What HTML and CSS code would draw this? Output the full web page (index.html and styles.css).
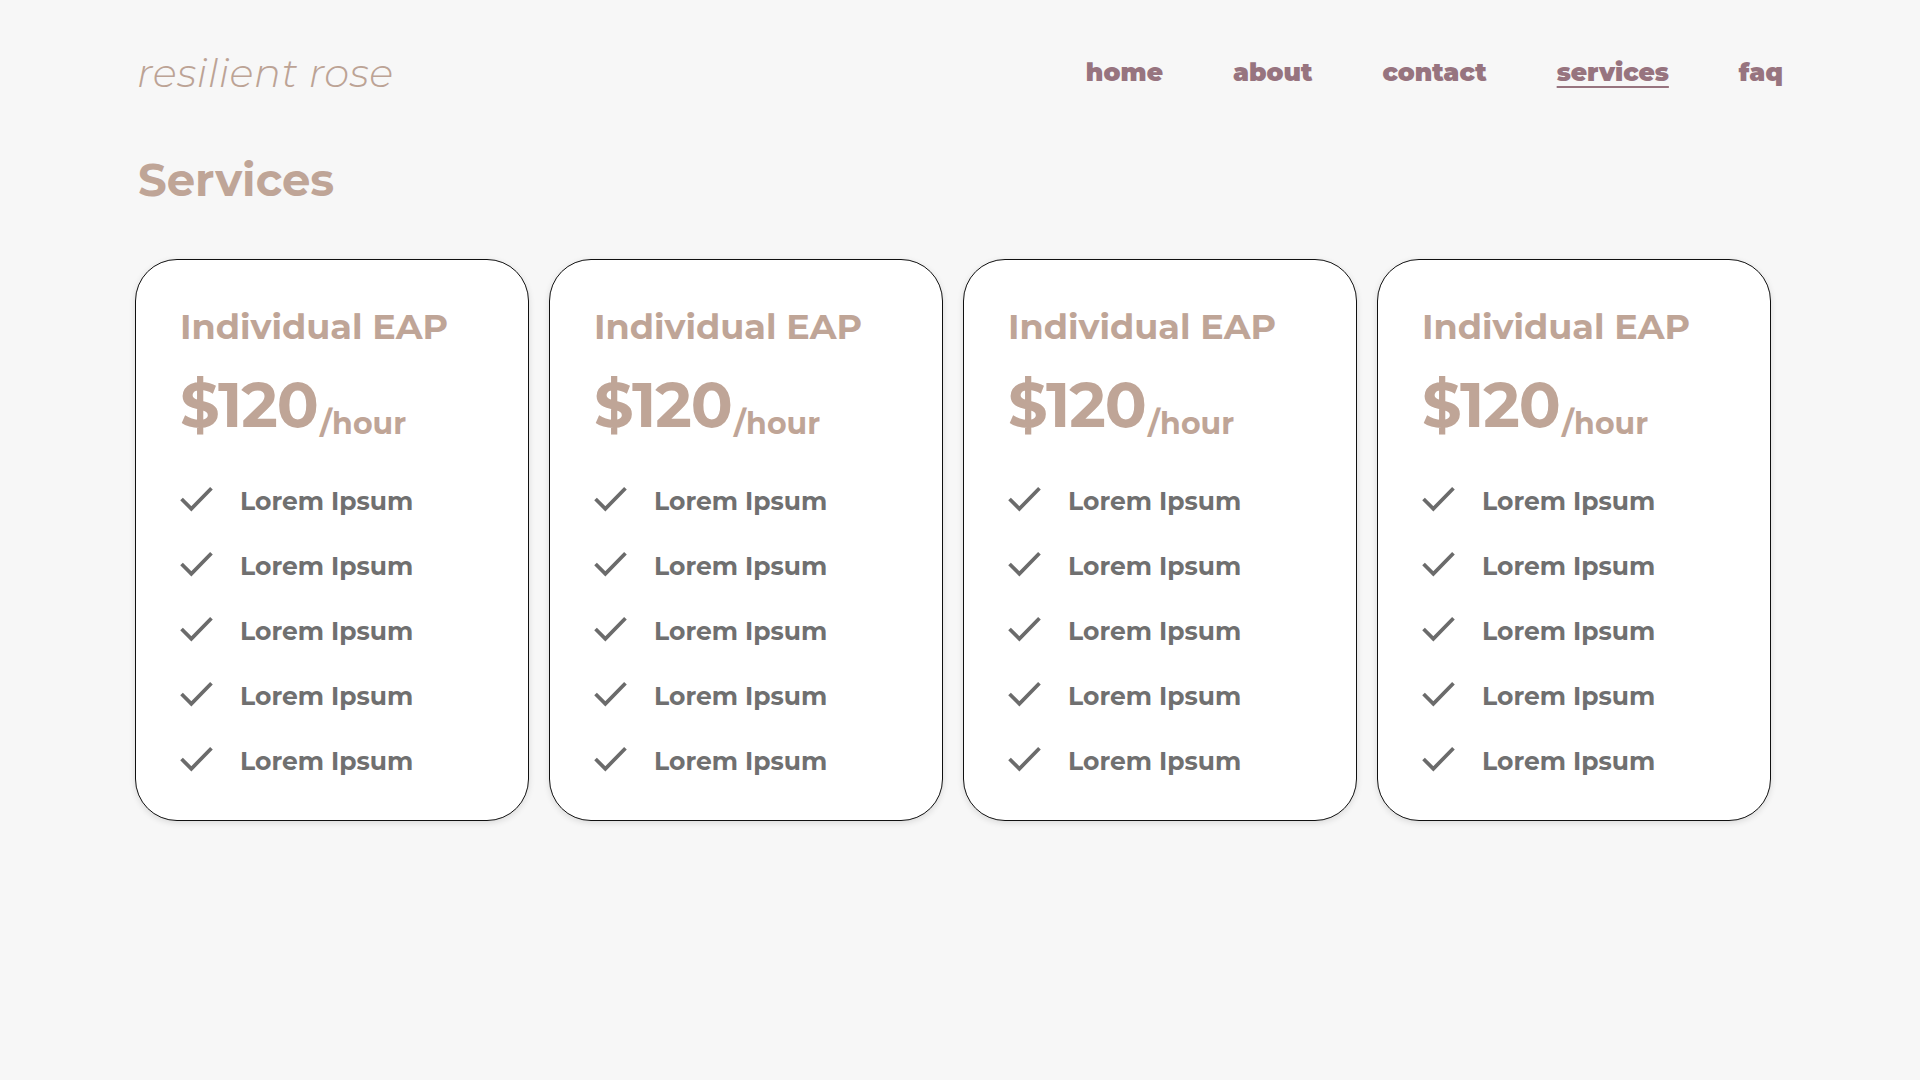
FILE: index.html
```html
<!DOCTYPE html>
<html lang="en">
<head>
<meta charset="utf-8">
<title>resilient rose - Services</title>
<link rel="stylesheet" href="styles.css">
</head>
<body>
<header class="header">
  <div class="logo">resilient rose</div>
  <nav class="nav">
    <a href="#" class="nav-link">home</a>
    <a href="#" class="nav-link">about</a>
    <a href="#" class="nav-link">contact</a>
    <a href="#" class="nav-link active">services</a>
    <a href="#" class="nav-link">faq</a>
  </nav>
</header>
<main class="main">
  <h1 class="page-title">Services</h1>
  <div class="cards">
    <div class="card">
      <h2 class="card-title">Individual EAP</h2>
      <div class="price"><span class="amount">$120</span><span class="unit">/hour</span></div>
      <ul class="features">
        <li class="feature"><svg class="check" viewBox="0 0 32 26"><path d="M1.5 13.5 L11 23 L30.5 3"/></svg><span>Lorem Ipsum</span></li>
        <li class="feature"><svg class="check" viewBox="0 0 32 26"><path d="M1.5 13.5 L11 23 L30.5 3"/></svg><span>Lorem Ipsum</span></li>
        <li class="feature"><svg class="check" viewBox="0 0 32 26"><path d="M1.5 13.5 L11 23 L30.5 3"/></svg><span>Lorem Ipsum</span></li>
        <li class="feature"><svg class="check" viewBox="0 0 32 26"><path d="M1.5 13.5 L11 23 L30.5 3"/></svg><span>Lorem Ipsum</span></li>
        <li class="feature"><svg class="check" viewBox="0 0 32 26"><path d="M1.5 13.5 L11 23 L30.5 3"/></svg><span>Lorem Ipsum</span></li>
      </ul>
    </div>
    <div class="card">
      <h2 class="card-title">Individual EAP</h2>
      <div class="price"><span class="amount">$120</span><span class="unit">/hour</span></div>
      <ul class="features">
        <li class="feature"><svg class="check" viewBox="0 0 32 26"><path d="M1.5 13.5 L11 23 L30.5 3"/></svg><span>Lorem Ipsum</span></li>
        <li class="feature"><svg class="check" viewBox="0 0 32 26"><path d="M1.5 13.5 L11 23 L30.5 3"/></svg><span>Lorem Ipsum</span></li>
        <li class="feature"><svg class="check" viewBox="0 0 32 26"><path d="M1.5 13.5 L11 23 L30.5 3"/></svg><span>Lorem Ipsum</span></li>
        <li class="feature"><svg class="check" viewBox="0 0 32 26"><path d="M1.5 13.5 L11 23 L30.5 3"/></svg><span>Lorem Ipsum</span></li>
        <li class="feature"><svg class="check" viewBox="0 0 32 26"><path d="M1.5 13.5 L11 23 L30.5 3"/></svg><span>Lorem Ipsum</span></li>
      </ul>
    </div>
    <div class="card">
      <h2 class="card-title">Individual EAP</h2>
      <div class="price"><span class="amount">$120</span><span class="unit">/hour</span></div>
      <ul class="features">
        <li class="feature"><svg class="check" viewBox="0 0 32 26"><path d="M1.5 13.5 L11 23 L30.5 3"/></svg><span>Lorem Ipsum</span></li>
        <li class="feature"><svg class="check" viewBox="0 0 32 26"><path d="M1.5 13.5 L11 23 L30.5 3"/></svg><span>Lorem Ipsum</span></li>
        <li class="feature"><svg class="check" viewBox="0 0 32 26"><path d="M1.5 13.5 L11 23 L30.5 3"/></svg><span>Lorem Ipsum</span></li>
        <li class="feature"><svg class="check" viewBox="0 0 32 26"><path d="M1.5 13.5 L11 23 L30.5 3"/></svg><span>Lorem Ipsum</span></li>
        <li class="feature"><svg class="check" viewBox="0 0 32 26"><path d="M1.5 13.5 L11 23 L30.5 3"/></svg><span>Lorem Ipsum</span></li>
      </ul>
    </div>
    <div class="card">
      <h2 class="card-title">Individual EAP</h2>
      <div class="price"><span class="amount">$120</span><span class="unit">/hour</span></div>
      <ul class="features">
        <li class="feature"><svg class="check" viewBox="0 0 32 26"><path d="M1.5 13.5 L11 23 L30.5 3"/></svg><span>Lorem Ipsum</span></li>
        <li class="feature"><svg class="check" viewBox="0 0 32 26"><path d="M1.5 13.5 L11 23 L30.5 3"/></svg><span>Lorem Ipsum</span></li>
        <li class="feature"><svg class="check" viewBox="0 0 32 26"><path d="M1.5 13.5 L11 23 L30.5 3"/></svg><span>Lorem Ipsum</span></li>
        <li class="feature"><svg class="check" viewBox="0 0 32 26"><path d="M1.5 13.5 L11 23 L30.5 3"/></svg><span>Lorem Ipsum</span></li>
        <li class="feature"><svg class="check" viewBox="0 0 32 26"><path d="M1.5 13.5 L11 23 L30.5 3"/></svg><span>Lorem Ipsum</span></li>
      </ul>
    </div>
  </div>
</main>
</body>
</html>
```
FILE: styles.css
```css
* { box-sizing: border-box; }
html, body { margin: 0; padding: 0; }
body {
  background: #f7f7f7;
  font-family: "Montserrat", "Inter", "DejaVu Sans", sans-serif;
  width: 1920px;
  height: 1080px;
  overflow: hidden;
}
.header {
  display: flex;
  justify-content: space-between;
  align-items: center;
  padding: 46px 137px 0 137px;
  height: 98px;
}
.logo {
  font-size: 40px;
  font-weight: 300;
  font-style: italic;
  color: #bca395;
  letter-spacing: 0.5px;
}
.nav {
  display: flex;
  align-items: center;
  gap: 70px;
}
.nav-link {
  font-size: 25px;
  font-weight: 900;
  color: #97747f;
  text-decoration: none;
}
.nav-link.active {
  text-decoration: underline;
  text-decoration-thickness: 2px;
  text-underline-offset: 5px;
}
.main {
  padding: 0 135px;
}
.page-title {
  margin: 54px 0 0 3px;
  font-size: 45px;
  font-weight: 700;
  color: #bfa597;
  line-height: 56px;
  height: 107px;
}
.cards {
  display: flex;
  gap: 20px;
}
.card {
  width: 394px;
  height: 562px;
  background: #ffffff;
  border: 1px solid #111111;
  border-radius: 42px;
  box-shadow: 0 2px 6px rgba(0,0,0,0.12);
  padding: 45px 0 0 44px;
}
.card-title {
  margin: 0;
  font-size: 35px;
  font-weight: 700;
  color: #bfa597;
  line-height: 44px;
}
.price {
  margin-top: 21px;
  display: flex;
  align-items: baseline;
  color: #bfa597;
  height: 70px;
}
.amount {
  font-size: 62px;
  font-weight: 700;
  letter-spacing: -1px;
  line-height: 70px;
}
.unit {
  font-size: 30px;
  font-weight: 700;
  position: relative;
  top: 7px;
  margin-left: 2px;
}
.features {
  list-style: none;
  margin: 43px 0 0 0;
  padding: 0;
  display: flex;
  flex-direction: column;
  gap: 29px;
}
.feature {
  display: flex;
  align-items: center;
  height: 36px;
  font-size: 25px;
  font-weight: 700;
  color: #707070;
}
.check {
  width: 33px;
  height: 27px;
  margin-right: 27px;
  fill: none;
  stroke: #6b6b6b;
  stroke-width: 3.6;
  stroke-linecap: butt;
  stroke-linejoin: miter;
  position: relative;
  top: -3px;
}
```
